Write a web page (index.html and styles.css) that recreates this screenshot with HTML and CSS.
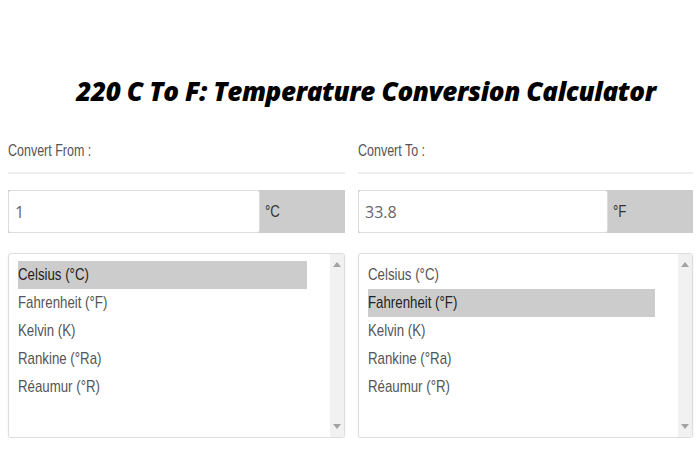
FILE: index.html
```html
<!DOCTYPE html>
<html>
<head>
	<title>220 C To F</title>
	<link rel="stylesheet" href="styles.css">
</head>
<body>
	<h1 class="title">220 C To F: Temperature Conversion Calculator</h1>
	<div class="converter">
		<div class="side">
			<label class="side-label"><span class="narrow">Convert From :</span></label>
			<div class="field">
				<input class="field-input" type="text" value="1">
				<span class="field-unit"><span class="narrow">°C</span></span>
			</div>
			<div class="unit-list">
				<div class="unit-options">
					<div class="unit-option selected"><span class="narrow">Celsius (°C)</span></div>
					<div class="unit-option"><span class="narrow">Fahrenheit (°F)</span></div>
					<div class="unit-option"><span class="narrow">Kelvin (K)</span></div>
					<div class="unit-option"><span class="narrow">Rankine (°Ra)</span></div>
					<div class="unit-option"><span class="narrow">Réaumur (°R)</span></div>
				</div>
				<div class="scrollbar">
					<span class="arrow up"></span>
					<span class="arrow down"></span>
				</div>
			</div>
		</div>
		<div class="side">
			<label class="side-label"><span class="narrow">Convert To :</span></label>
			<div class="field">
				<input class="field-input" type="text" value="33.8">
				<span class="field-unit"><span class="narrow">°F</span></span>
			</div>
			<div class="unit-list">
				<div class="unit-options">
					<div class="unit-option"><span class="narrow">Celsius (°C)</span></div>
					<div class="unit-option selected"><span class="narrow">Fahrenheit (°F)</span></div>
					<div class="unit-option"><span class="narrow">Kelvin (K)</span></div>
					<div class="unit-option"><span class="narrow">Rankine (°Ra)</span></div>
					<div class="unit-option"><span class="narrow">Réaumur (°R)</span></div>
				</div>
				<div class="scrollbar">
					<span class="arrow up"></span>
					<span class="arrow down"></span>
				</div>
			</div>
		</div>
	</div>
</body>
</html>
```
FILE: styles.css
```css
body {
	margin: 0;
	background: #ffffff;
	font-family: "Liberation Sans", Arial, sans-serif;
	color: #555555;
}

/* the source font is a condensed face, squeeze the regular one */
.narrow {
	display: inline-block;
	white-space: nowrap;
	transform: scaleX(0.78);
	transform-origin: left center;
}

.title {
	margin: 74px 0 0 0;
	padding-left: 32px;
	text-align: center;
	font-family: "Open Sans", sans-serif;
	font-weight: 800;
	font-style: italic;
	font-size: 26px;
	line-height: 34px;
	color: #000000;
	letter-spacing: -0.38px;
}

.converter {
	display: grid;
	grid-template-columns: 337px 335px;
	column-gap: 13px;
	padding: 0 7px 0 8px;
	margin-top: 33px;
}

.side-label {
	display: block;
	font-size: 16px;
	line-height: 20px;
	color: #555555;
	padding-bottom: 11px;
	border-bottom: 2px solid #eeeeee;
}

.field {
	display: flex;
	margin-top: 16px;
	height: 43px;
	background: #cccccc;
}

.field-input {
	flex: 1;
	box-sizing: border-box;
	height: 43px;
	margin: 0;
	border: 1px solid #dddddd;
	border-radius: 3px;
	padding: 0 6px;
	font-family: "Open Sans", sans-serif;
	font-size: 16px;
	color: #666666;
	background: #ffffff;
	outline: none;
}

.field-unit {
	width: 80px;
	padding-left: 5px;
	line-height: 43px;
	font-size: 17px;
	color: #333333;
}

.unit-list {
	display: flex;
	margin-top: 20px;
	height: 185px;
	box-sizing: border-box;
	border: 1px solid #dddddd;
	border-radius: 3px;
	box-shadow: 0 1px 2px rgba(0, 0, 0, 0.08);
	overflow: hidden;
}

.unit-options {
	flex: 1;
	padding: 7px 23px 0 9px;
}

.unit-option {
	height: 28px;
	line-height: 28px;
	font-size: 17px;
	color: #555555;
}

.unit-option.selected {
	background: #cccccc;
	color: #222222;
}

.scrollbar {
	width: 14px;
	background: #f1f1f1;
	display: flex;
	flex-direction: column;
	justify-content: space-between;
	align-items: center;
	padding: 8px 0;
}

.arrow {
	width: 0;
	height: 0;
	border-left: 4px solid transparent;
	border-right: 4px solid transparent;
}

.arrow.up {
	border-bottom: 5px solid #a3a3a3;
}

.arrow.down {
	border-top: 5px solid #a3a3a3;
}
```
